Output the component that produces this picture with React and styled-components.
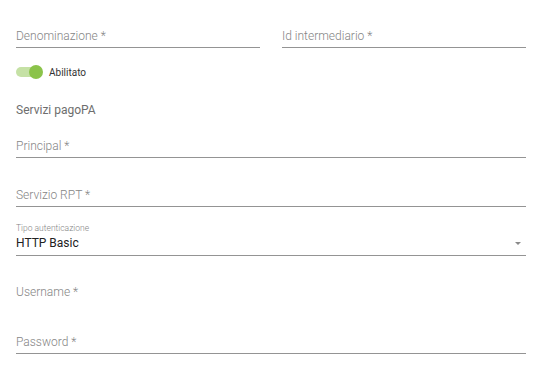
import React from 'react';
import styled, { createGlobalStyle } from 'styled-components';

const GlobalStyle = createGlobalStyle`
  body {
    margin: 0;
    background: #ffffff;
    font-family: Roboto, "Liberation Sans", sans-serif;
  }
`;

const Form = styled.div`
  width: 542px;
  box-sizing: border-box;
  padding: 0 16px;
  display: flex;
  flex-direction: column;
`;

const TwoCols = styled.div`
  display: grid;
  grid-template-columns: 1fr 1fr;
  column-gap: 22px;
`;

const Field = styled.div`
  margin-top: ${(p) => p.$top || 0}px;
  padding-bottom: ${(p) => p.$pad || 3}px;
  border-bottom: 1px solid ${(p) => (p.$noLine ? 'transparent' : '#949494')};
  display: flex;
  flex-direction: column;
`;

const Label = styled.div`
  font-size: 12px;
  font-weight: 300;
  line-height: 16px;
  color: #858585;
`;

const SmallLabel = styled.div`
  font-size: 8.5px;
  font-weight: 300;
  line-height: 10px;
  color: #858585;
  margin-bottom: 2px;
`;

const SelectRow = styled.div`
  display: flex;
  align-items: center;
  justify-content: space-between;
  padding-right: 5px;
`;

const Value = styled.div`
  font-size: 12px;
  line-height: 16px;
  color: #212121;
`;

const SwitchRow = styled.label`
  margin-top: 16px;
  height: 16px;
  display: flex;
  align-items: center;
  gap: 7px;
`;

const Track = styled.span`
  position: relative;
  width: 26px;
  height: 10px;
  border-radius: 5px;
  background: #c5e1a5;
`;

const Thumb = styled.span`
  position: absolute;
  top: -2px;
  right: -1px;
  width: 14px;
  height: 14px;
  border-radius: 50%;
  background: #8bc34a;
`;

const SwitchText = styled.span`
  font-size: 10px;
  color: #333333;
`;

const Section = styled.div`
  margin-top: 22px;
  font-size: 12px;
  line-height: 16px;
  color: #6e6e6e;
`;

const Arrow = () => (
  <svg width="6" height="3" viewBox="0 0 6 3">
    <path d="M0 0 L6 0 L3 3 Z" fill="#8a8a8a" />
  </svg>
);

export default function App() {
  return (
    <>
      <GlobalStyle />
      <Form>
        <TwoCols>
          <Field $top={28}>
            <Label>Denominazione *</Label>
          </Field>
          <Field $top={28}>
            <Label>Id intermediario *</Label>
          </Field>
        </TwoCols>
        <SwitchRow>
          <Track>
            <Thumb />
          </Track>
          <SwitchText>Abilitato</SwitchText>
        </SwitchRow>
        <Section>Servizi pagoPA</Section>
        <Field $top={20}>
          <Label>Principal *</Label>
        </Field>
        <Field $top={29}>
          <Label>Servizio RPT *</Label>
        </Field>
        <Field $top={16} $pad={4}>
          <SmallLabel>Tipo autenticazione</SmallLabel>
          <SelectRow>
            <Value>HTTP Basic</Value>
            <Arrow />
          </SelectRow>
        </Field>
        <Field $top={28} $noLine>
          <Label>Username *</Label>
        </Field>
        <Field $top={30}>
          <Label>Password *</Label>
        </Field>
      </Form>
    </>
  );
}
